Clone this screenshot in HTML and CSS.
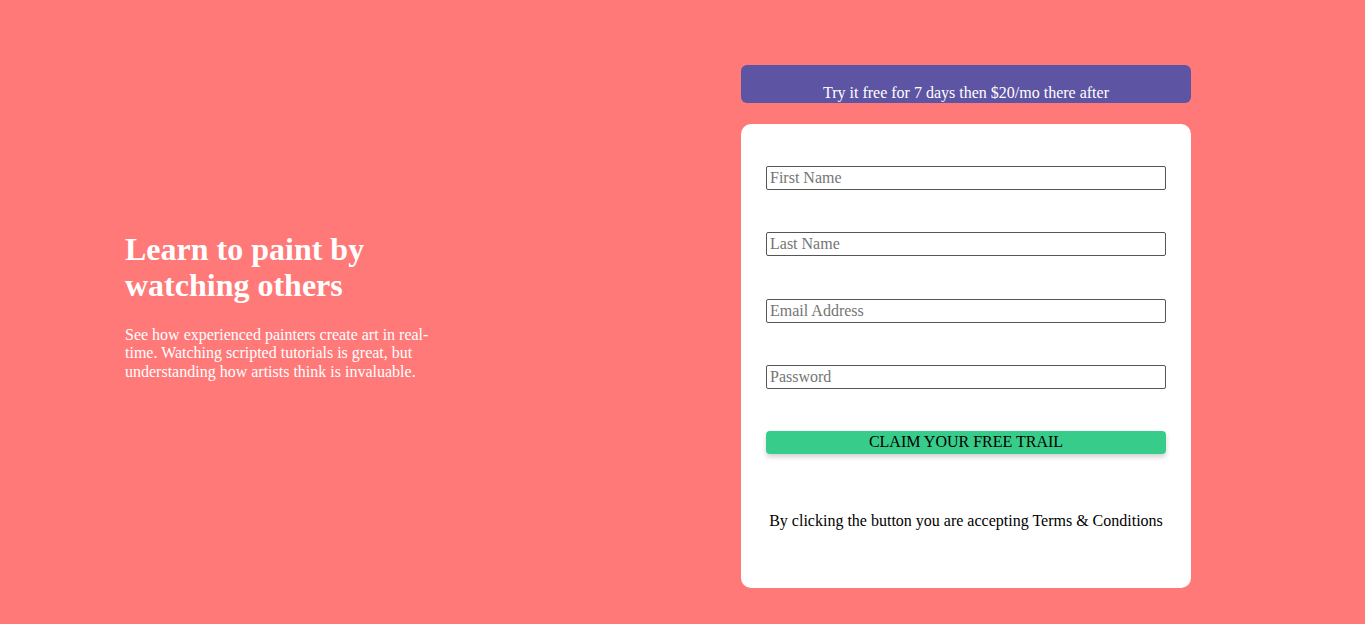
FILE: index.html
```html
<!DOCTYPE html>
<html lang="en">
<head>
<meta charset="utf-8">
<title>Learn to paint</title>
<link rel="stylesheet" href="styles.css">
</head>
<body>
<main class="page">
  <section class="intro">
    <h1 class="intro-title">Learn to paint by watching others</h1>
    <p class="intro-text">See how experienced painters create art in real-time. Watching scripted tutorials is great, but understanding how artists think is invaluable.</p>
  </section>
  <section class="signup">
    <div class="offer">Try it free for 7 days then $20/mo there after</div>
    <form class="card">
      <input class="field" type="text" placeholder="First Name">
      <input class="field" type="text" placeholder="Last Name">
      <input class="field" type="email" placeholder="Email Address">
      <input class="field" type="password" placeholder="Password">
      <button class="claim" type="button">CLAIM YOUR FREE TRAIL</button>
      <p class="terms">By clicking the button you are accepting Terms &amp; Conditions</p>
    </form>
  </section>
</main>
</body>
</html>
```

FILE: styles.css
```css
html, body {
  margin: 0;
  padding: 0;
}

body {
  background: #ff7979;
  font-family: "Liberation Serif", "Times New Roman", serif;
  font-size: 16px;
  color: #000;
}

.page {
  display: flex;
  align-items: flex-start;
  height: 624px;
  box-sizing: border-box;
  padding-left: 125px;
}

.intro {
  width: 320px;
  padding-top: 230.5px;
  color: #fff;
}

.intro-title {
  margin: 0 0 21.9px;
  font-size: 32px;
  font-weight: bold;
  line-height: 36.8px;
}

.intro-text {
  margin: 0;
  font-size: 16px;
  line-height: 18.4px;
}

.signup {
  width: 450px;
  margin-left: 296px;
  padding-top: 65px;
}

.offer {
  box-sizing: border-box;
  height: 38px;
  padding-top: 19px;
  background: #5e54a4;
  border-radius: 6px;
  color: #fff;
  text-align: center;
  line-height: 18.4px;
}

.card {
  display: flex;
  flex-direction: column;
  margin-top: 21px;
  padding: 42px 25px 58px;
  background: #fff;
  border-radius: 10px;
}

.field {
  box-sizing: border-box;
  height: 24px;
  margin: 0 0 42.3px;
  padding: 1px 3px;
  border: 1px solid #555;
  border-radius: 2px;
  font-family: "Liberation Serif", "Times New Roman", serif;
  font-size: 16px;
  color: #000;
  background: #fff;
}

.field::placeholder {
  color: #757575;
}

.claim {
  box-sizing: border-box;
  height: 22.5px;
  padding: 0;
  border: none;
  border-radius: 4px;
  background: #38cc8b;
  box-shadow: 0 3px 5px rgba(0, 0, 0, 0.18);
  font-family: "Liberation Serif", "Times New Roman", serif;
  font-size: 16px;
  line-height: 18px;
  color: #000;
}

.terms {
  margin: 58px 0 0;
  text-align: center;
  line-height: 18.4px;
}
```
